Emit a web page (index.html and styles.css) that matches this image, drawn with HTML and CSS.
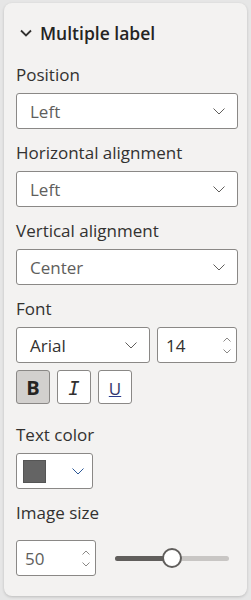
FILE: index.html
```html
<!DOCTYPE html>
<html lang="en">
<head>
  <meta charset="UTF-8" />
  <meta name="viewport" content="width=device-width, initial-scale=1.0"/>
  <title>Multiple label</title>
  <link rel="stylesheet" href="styles.css">
</head>
<body>

  <div class="panel">
    <!-- header -->
    <div class="card-header">
      <svg class="collapse-icon" width="12" height="8" viewBox="0 0 12 8">
        <path d="M1 1.5 L6 6.5 L11 1.5" fill="none" stroke="#323130" stroke-width="1.8"/>
      </svg>
      <span class="card-title">Multiple label</span>
    </div>

    <div class="field first">
      <div class="field-label">Position</div>
      <div class="dropdown">
        <span>Left</span>
        <svg class="chev" width="12" height="7" viewBox="0 0 12 7"><path d="M0.5 0.5 L6 6 L11.5 0.5" fill="none" stroke="#605e5c" stroke-width="1"/></svg>
      </div>
    </div>

    <div class="field">
      <div class="field-label">Horizontal alignment</div>
      <div class="dropdown">
        <span>Left</span>
        <svg class="chev" width="12" height="7" viewBox="0 0 12 7"><path d="M0.5 0.5 L6 6 L11.5 0.5" fill="none" stroke="#605e5c" stroke-width="1"/></svg>
      </div>
    </div>

    <div class="field">
      <div class="field-label">Vertical alignment</div>
      <div class="dropdown">
        <span>Center</span>
        <svg class="chev" width="12" height="7" viewBox="0 0 12 7"><path d="M0.5 0.5 L6 6 L11.5 0.5" fill="none" stroke="#605e5c" stroke-width="1"/></svg>
      </div>
    </div>

    <div class="field">
      <div class="field-label">Font</div>
      <div class="font-row">
        <div class="dropdown font-family">
          <span class="dark">Arial</span>
          <svg class="chev" width="12" height="7" viewBox="0 0 12 7"><path d="M0.5 0.5 L6 6 L11.5 0.5" fill="none" stroke="#605e5c" stroke-width="1"/></svg>
        </div>
        <div class="spin-input">
          <span class="dark">14</span>
          <div class="spin">
            <svg width="8" height="5" viewBox="0 0 8 5"><path d="M0.5 4.5 L4 1 L7.5 4.5" fill="none" stroke="#8a8886" stroke-width="1"/></svg>
            <svg width="8" height="5" viewBox="0 0 8 5"><path d="M0.5 0.5 L4 4 L7.5 0.5" fill="none" stroke="#8a8886" stroke-width="1"/></svg>
          </div>
        </div>
      </div>
      <div class="style-row">
        <button class="style-btn active"><b>B</b></button>
        <button class="style-btn"><span class="italic-i">I</span></button>
        <button class="style-btn"><span class="under-u">U</span></button>
      </div>
    </div>

    <div class="field color-field">
      <div class="field-label">Text color</div>
      <div class="color-picker">
        <span class="swatch"></span>
        <svg class="chev" width="12" height="7" viewBox="0 0 12 7"><path d="M0.5 0.5 L6 6 L11.5 0.5" fill="none" stroke="#2b5797" stroke-width="1"/></svg>
      </div>
    </div>

    <div class="field">
      <div class="field-label">Image size</div>
      <div class="size-row">
        <div class="spin-input size-input">
          <span>50</span>
          <div class="spin">
            <svg width="8" height="5" viewBox="0 0 8 5"><path d="M0.5 4.5 L4 1 L7.5 4.5" fill="none" stroke="#8a8886" stroke-width="1"/></svg>
            <svg width="8" height="5" viewBox="0 0 8 5"><path d="M0.5 0.5 L4 4 L7.5 0.5" fill="none" stroke="#8a8886" stroke-width="1"/></svg>
          </div>
        </div>
        <div class="slider">
          <div class="track"><div class="fill" style="width: 50%"></div></div>
          <div class="thumb" style="left: 50%"></div>
        </div>
      </div>
    </div>
  </div>

</body>
</html>
```

FILE: styles.css
```css
body {
  margin: 0;
  background: #e6e6e6;
  font-family: 'Open Sans', sans-serif;
  font-size: 17px;
  color: #323130;
}

.panel {
  margin: 3px 4px 4px 4px;
  height: 593px;
  box-sizing: border-box;
  padding: 16px 9px 0 12px;
  background: #f3f2f1;
  border-radius: 8px;
  box-shadow: 0 1px 3px rgba(0,0,0,0.18);
}

.card-header {
  display: flex;
  align-items: center;
  height: 28px;
  padding-left: 4px;
}

.collapse-icon {
  margin-right: 8px;
}

.card-title {
  font-size: 17.5px;
  font-weight: 600;
  color: #252423;
}

.field {
  margin-top: 13px;
}

.field.first {
  margin-top: 17px;
}

.field-label {
  height: 22px;
  line-height: 22px;
  margin-bottom: 7px;
  color: #323130;
}

.dropdown {
  display: flex;
  align-items: center;
  justify-content: space-between;
  height: 36px;
  box-sizing: border-box;
  padding: 0 12px 0 13px;
  background: #fff;
  border: 1px solid #8a8886;
  border-radius: 3px;
  color: #605e5c;
}

.dark {
  color: #323130;
}

.font-row {
  display: flex;
  gap: 7px;
}

.font-family {
  width: 134px;
}

.spin-input {
  display: flex;
  align-items: center;
  justify-content: space-between;
  width: 80px;
  height: 36px;
  box-sizing: border-box;
  padding: 0 5px 0 8px;
  background: #fff;
  border: 1px solid #8a8886;
  border-radius: 3px;
}

.spin {
  display: flex;
  flex-direction: column;
  gap: 7px;
}

.spin svg {
  display: block;
}

.style-row {
  display: flex;
  gap: 7px;
  margin-top: 7px;
}

.style-btn {
  width: 34px;
  height: 34px;
  padding: 0;
  background: #fff;
  border: 1px solid #8a8886;
  border-radius: 3px;
  font-family: 'Open Sans', sans-serif;
  font-size: 20px;
  color: #252423;
}

.style-btn.active {
  background: #d2d0ce;
}

.style-btn b {
  font-weight: 700;
}

.italic-i {
  font-family: 'DejaVu Sans Mono', monospace;
  font-style: italic;
  font-size: 19px;
  color: #323130;
}

.under-u {
  text-decoration: underline;
  text-decoration-color: #2b3a8c;
  font-size: 17px;
  color: #33366a;
}

.color-field {
  margin-top: 20px;
}

.color-picker {
  display: flex;
  align-items: center;
  gap: 26px;
  width: 77px;
  height: 36px;
  box-sizing: border-box;
  padding-left: 6px;
  background: #fff;
  border: 1px solid #8a8886;
  border-radius: 3px;
}

.swatch {
  width: 23px;
  height: 23px;
  background: #646464;
  border: 1px solid #555;
  box-sizing: border-box;
}

.size-row {
  display: flex;
  align-items: center;
  margin-top: 16px;
}

.size-input {
  color: #605e5c;
}

.slider {
  position: relative;
  width: 114px;
  height: 20px;
  margin-left: 19px;
}

.track {
  position: absolute;
  top: 8px;
  left: 0;
  right: 0;
  height: 5px;
  border-radius: 3px;
  background: #c8c6c4;
  overflow: hidden;
}

.fill {
  height: 100%;
  background: #605e5c;
}

.thumb {
  position: absolute;
  top: 0;
  width: 20px;
  height: 20px;
  margin-left: -10px;
  box-sizing: border-box;
  border: 2px solid #605e5c;
  border-radius: 50%;
  background: #fff;
}
```
